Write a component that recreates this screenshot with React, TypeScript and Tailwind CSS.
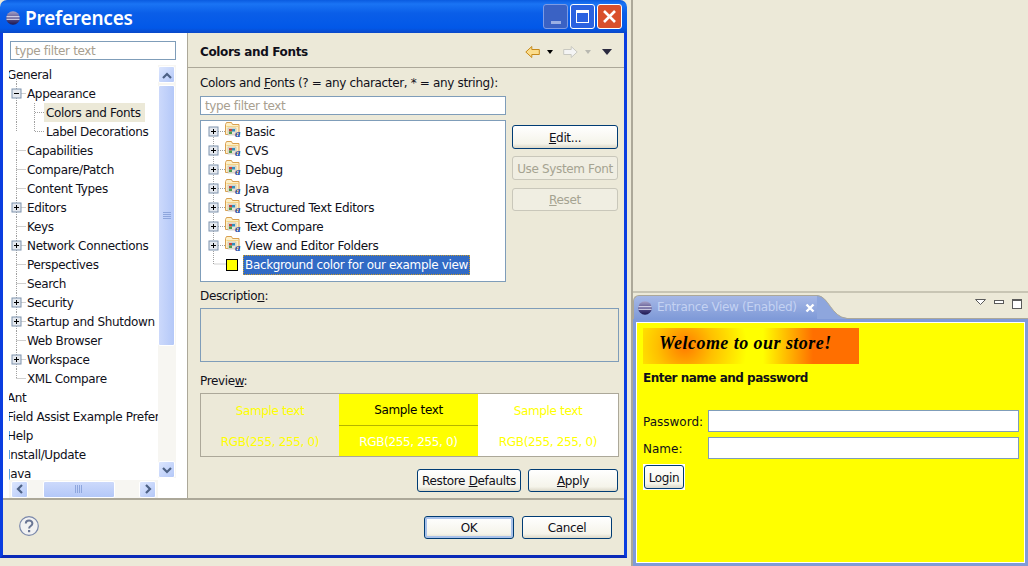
import React from "react";

const FONT = "[font-family:'DejaVu_Sans',sans-serif] text-[12px] tracking-[-0.35px] leading-[19px] text-[#10101a]";

type Node = { label: string; depth: number; exp?: "plus" | "minus"; selected?: boolean; vert?: number[]; last?: boolean };

const NAV: Node[] = [
  { label: "General", depth: 0, vert: [7] },
  { label: "Appearance", depth: 1, exp: "minus", vert: [7] },
  { label: "Colors and Fonts", depth: 2, selected: true, vert: [7, 25] },
  { label: "Label Decorations", depth: 2, last: true, vert: [7] },
  { label: "Capabilities", depth: 1, vert: [7] },
  { label: "Compare/Patch", depth: 1, vert: [7] },
  { label: "Content Types", depth: 1, vert: [7] },
  { label: "Editors", depth: 1, exp: "plus", vert: [7] },
  { label: "Keys", depth: 1, vert: [7] },
  { label: "Network Connections", depth: 1, exp: "plus", vert: [7] },
  { label: "Perspectives", depth: 1, vert: [7] },
  { label: "Search", depth: 1, vert: [7] },
  { label: "Security", depth: 1, exp: "plus", vert: [7] },
  { label: "Startup and Shutdown", depth: 1, exp: "plus", vert: [7] },
  { label: "Web Browser", depth: 1, vert: [7] },
  { label: "Workspace", depth: 1, exp: "plus", vert: [7] },
  { label: "XML Compare", depth: 1, last: true, vert: [7] },
  { label: "Ant", depth: 0 },
  { label: "Field Assist Example Preferences", depth: 0 },
  { label: "Help", depth: 0 },
  { label: "Install/Update", depth: 0 },
  { label: "Java", depth: 0 },
];

const FOLDERS = ["Basic", "CVS", "Debug", "Java", "Structured Text Editors", "Text Compare", "View and Editor Folders"];

function Expander({ x, y, kind }: { x: number; y: number; kind: "plus" | "minus" }) {
  return (
    <g>
      <rect x={x - 4.5} y={y - 4.5} width="9" height="9" fill="#e4e8ee" stroke="#7f93ad" />
      <path d={`M${x - 2.5} ${y}h5`} stroke="#000" />
      {kind === "plus" && <path d={`M${x} ${y - 2.5}v5`} stroke="#000" />}
    </g>
  );
}

function NavRow({ node }: { node: Node }) {
  const textLeft = node.depth === 0 ? "ml-[-2px]" : node.depth === 1 ? "ml-[18px]" : "ml-[35px]";
  const cx = node.depth === 1 ? 7.5 : 25.5;
  return (
    <div className="relative h-[19px] whitespace-nowrap">
      <svg className="absolute left-0 top-0" width="46" height="19">
        {(node.vert ?? []).map((v) => (
          <path
            key={v}
            d={`M${v + 0.5} ${node.depth === 0 ? 14 : 0}V${node.last && v === 7 ? 9 : 19}`}
            stroke="#a0a0a0"
            strokeDasharray="1 1"
          />
        ))}
        {node.depth === 2 && <path d="M25.5 0V9.5H35" stroke="#a0a0a0" strokeDasharray="1 1" fill="none" />}
        {node.depth === 1 && <path d="M7.5 9.5H17" stroke="#a0a0a0" strokeDasharray="1 1" />}
        {node.exp && <Expander x={cx} y={9.5} kind={node.exp} />}
      </svg>
      <span
        className={`relative inline-block h-[19px] pt-[1px] ${textLeft} ${
          node.selected ? "bg-[#ece9d8] pl-[2px] pr-[4px]" : node.depth === 2 ? "pl-[2px]" : ""
        }`}
      >
        {node.label}
      </span>
    </div>
  );
}

function FolderIcon() {
  return (
    <svg width="16" height="16" viewBox="0 0 16 16" className="mb-[3px] shrink-0">
      <path d="M.5 2.500l1-2h5l1 2h6.500v10H.5z" fill="#fdf0c8" stroke="#d9a050" />
      <path d="M1.500 4.500h12" stroke="#f4d488" />
      <rect x="3" y="6" width="8" height="7" fill="#e8e4d8" stroke="#b8b4a8" strokeWidth="0.6" />
      <rect x="4" y="7" width="3" height="2.500" fill="#c8433d" />
      <rect x="7" y="7" width="3" height="2.500" fill="#2f8fc0" />
      <rect x="4" y="9.500" width="3" height="2.500" fill="#4d9c4d" />
      <text x="10" y="15" fontSize="11" fontStyle="italic" fontWeight="700" fill="#1f4fa8" fontFamily="'Liberation Serif',serif">
        a
      </text>
    </svg>
  );
}

function ColorTree() {
  return (
    <div className="relative h-[162px] w-[306px] border border-[#7f9db9] bg-white pl-[6px] pt-[1px]">
      <svg className="absolute left-[8px] top-[10px]" width="30" height="140">
        <path d="M4.500 0V133H24" fill="none" stroke="#a0a0a0" strokeDasharray="1 1" />
      </svg>
      {FOLDERS.map((f) => (
        <div key={f} className="relative flex h-[19px] items-center">
          <svg width="18" height="19" className="shrink-0">
            <path d="M7 9.500H18" stroke="#a0a0a0" strokeDasharray="1 1" />
            <Expander x={6.500} y={9.500} kind="plus" />
          </svg>
          <FolderIcon />
          <span className="ml-[4px] pt-[2px]">{f}</span>
        </div>
      ))}
      <div className="relative flex h-[19px] items-center pl-[19px]">
        <span className="h-[12px] w-[12px] border border-black bg-[#ffff00]" />
        <span className="ml-[5px] border border-dotted border-[#c89a2c] bg-[#316ac5] pb-[1px] pl-[1px] pr-[1px] pt-[1px] leading-[16px] text-white">
          Background color for our example view
        </span>
      </div>
    </div>
  );
}

function Btn({ className, children, disabled }: { className: string; children: React.ReactNode; disabled?: boolean }) {
  return (
    <button
      className={`flex items-center justify-center rounded-[3px] border pt-[2px] ${
        disabled
          ? "border-[#c9c7ba] bg-[#f0eee2] text-[#a5a391]"
          : "border-[#003c74] bg-[linear-gradient(180deg,#ffffff,#f5f4ea_80%,#dcd8c8)]"
      } ${className}`}
    >
      {children}
    </button>
  );
}

function Chevron({ dir }: { dir: "up" | "down" | "left" | "right" }) {
  const d = {
    up: "M3 10l4-4 4 4",
    down: "M3 5l4 4 4-4",
    left: "M9 3L5 7l4 4",
    right: "M5 3l4 4-4 4",
  }[dir];
  return (
    <svg width="14" height="14" viewBox="0 0 14 14">
      <path d={d} fill="none" stroke="#4d6185" strokeWidth="2.200" />
    </svg>
  );
}

function ScrollBtn({ dir }: { dir: "up" | "down" | "left" | "right" }) {
  return (
    <div className="flex h-[17px] w-[17px] shrink-0 items-center justify-center rounded-[2px] border border-white bg-[linear-gradient(135deg,#dce6fe,#b4c8f8)]">
      <Chevron dir={dir} />
    </div>
  );
}

function Grip({ vertical }: { vertical?: boolean }) {
  return (
    <svg width="8" height="8" viewBox="0 0 8 8">
      {[0, 2, 4, 6].map((n) => (
        <path key={n} d={vertical ? `M0 ${n + 0.5}h8` : `M${n + 0.5} 0v8`} stroke="#8ea6dd" />
      ))}
    </svg>
  );
}

function Globe({ size = 14, id }: { size?: number; id: string }) {
  return (
    <svg width={size} height={size} viewBox="0 0 14 14" className="shrink-0">
      <defs>
        <linearGradient id={id} x1="0" y1="0" x2="0" y2="1">
          <stop offset="0" stopColor="#a8a4c8" />
          <stop offset="0.5" stopColor="#5a5490" />
          <stop offset="1" stopColor="#1c1650" />
        </linearGradient>
      </defs>
      <circle cx="7" cy="7" r="6.800" fill={`url(#${id})`} />
      <path d="M.5 5.800h13M.5 8.200h13" stroke="#f0f0fa" strokeWidth="1.100" />
    </svg>
  );
}

function TitleBar() {
  return (
    <div className="flex h-[33px] shrink-0 items-center rounded-t-[7px] bg-[linear-gradient(180deg,#0a5be0_0,#1a74f4_12%,#0a5ee8_40%,#0258e8_85%,#0a48c8)] pl-[6px] pr-[5px]">
      <div className="pt-[3px]">
        <Globe id="globe-title" />
      </div>
      <span className="ml-[5px] pt-[2px] text-[19px] font-semibold leading-[24px] tracking-[-0.2px] text-white [font-family:'Noto_Sans',sans-serif]">
        Preferences
      </span>
      <div className="ml-auto flex items-center gap-[2px]">
        <div className="flex h-[25px] w-[25px] items-end justify-center rounded-[3px] border border-[#7d9be4] bg-[#3a62c4] pb-[4px]">
          <span className="h-[3px] w-[10px] bg-[#9ab0e4]" />
        </div>
        <div className="flex h-[25px] w-[25px] items-center justify-center rounded-[3px] border border-white bg-[#2a62e0]">
          <span className="h-[13px] w-[13px] border border-t-[3px] border-white" />
        </div>
        <div className="flex h-[25px] w-[25px] items-center justify-center rounded-[3px] border border-white bg-[#d9502c]">
          <svg width="15" height="15" viewBox="0 0 15 15">
            <path d="M2 2l11 11M13 2L2 13" stroke="#fff" strokeWidth="2.600" />
          </svg>
        </div>
      </div>
    </div>
  );
}

function NavPane() {
  return (
    <div className="flex w-[185px] shrink-0 flex-col border-r border-[#aca899] bg-white pt-[8px]">
      <div className="ml-[7px] h-[19px] w-[166px] border border-[#7f9db9] pl-[4px] text-[#a8a090]">type filter text</div>
      <div className="ml-[6px] mt-[5px] flex">
        <div className="flex w-[149px] flex-col">
          <div className="h-[415px] overflow-hidden">
            {NAV.map((n) => (
              <NavRow key={n.label} node={n} />
            ))}
          </div>
          <div className="flex h-[18px] items-center bg-[#f7f6f2] pl-[2px]">
            <ScrollBtn dir="left" />
            <div className="ml-[15px] flex h-[17px] w-[72px] items-center justify-center rounded-[2px] border border-white bg-[linear-gradient(180deg,#ccd9fb,#b4c8f8)]">
              <Grip />
            </div>
            <div className="ml-[24px]">
              <ScrollBtn dir="right" />
            </div>
          </div>
        </div>
        <div className="flex h-[413px] w-[18px] flex-col bg-[#f7f6f2] pt-[1px]">
          <ScrollBtn dir="up" />
          <div className="mt-[2px] flex h-[261px] w-[17px] items-center justify-center rounded-[2px] border border-white bg-[linear-gradient(90deg,#ccd9fb,#b4c8f8)]">
            <Grip vertical />
          </div>
          <div className="flex-1" />
          <ScrollBtn dir="down" />
        </div>
      </div>
    </div>
  );
}

function PreviewCell({ className, children }: { className: string; children: React.ReactNode }) {
  return <div className={`flex items-center justify-center pt-[2px] ${className}`}>{children}</div>;
}

function ContentPane() {
  return (
    <div className="flex min-w-0 flex-1 flex-col">
      <div className="flex h-[35px] shrink-0 items-center border-b border-[#aca899] px-[12px] pt-[4px]">
        <span className="font-bold">Colors and Fonts</span>
        <div className="ml-auto flex items-center">
          <svg width="15" height="14" viewBox="0 0 15 14">
            <path d="M.8 7l6-5.500V4.500h7.500v5H6.800v3z" fill="#fbdd8c" stroke="#c78a1a" />
          </svg>
          <svg className="ml-[7px]" width="6" height="4">
            <path d="M0 0h6L3 4z" fill="#000" />
          </svg>
          <svg className="ml-[10px]" width="15" height="14" viewBox="0 0 15 14">
            <path d="M14.200 7l-6-5.500V4.500H.7v5h7.500v3z" fill="#f4f4f4" stroke="#c8c8c0" />
          </svg>
          <svg className="ml-[7px]" width="6" height="4">
            <path d="M0 0h6L3 4z" fill="#b8b8b0" />
          </svg>
          <svg className="ml-[11px]" width="10" height="6">
            <path d="M0 0h10L5 6z" fill="#2b2b40" />
          </svg>
        </div>
      </div>
      <div className="flex flex-col pl-[12px]">
        <div className="mt-[5px] h-[19px] pt-[1px]">
          Colors and <u>F</u>onts (? = any character, * = any string):
        </div>
        <div className="mt-[4px] h-[19px] w-[306px] border border-[#7f9db9] bg-white pl-[4px] text-[#a8a090]">type filter text</div>
        <div className="mt-[5px] flex">
          <ColorTree />
          <div className="ml-[6px] flex w-[106px] flex-col pt-[5px]">
            <Btn className="h-[24px]">
              <span>
                <u>E</u>dit...
              </span>
            </Btn>
            <Btn disabled className="mt-[7px] h-[24px]">
              Use System Font
            </Btn>
            <Btn disabled className="mt-[8px] h-[23px]">
              <span>
                <u>R</u>eset
              </span>
            </Btn>
          </div>
        </div>
        <div className="mt-[4px] h-[19px] pt-[1px]">
          Descriptio<u>n</u>:
        </div>
        <div className="mt-[3px] h-[54px] w-[419px] border border-[#7f9db9]" />
        <div className="mt-[9px] h-[19px] pt-[1px]">
          Previe<u>w</u>:
        </div>
        <div className="mt-[3px] grid h-[64px] w-[419px] grid-cols-[138px_139px_140px] border border-[#aca899] text-center text-[#ffff00]">
          <div className="flex flex-col">
            <PreviewCell className="h-[32px]">Sample text</PreviewCell>
            <PreviewCell className="flex-1">RGB(255, 255, 0)</PreviewCell>
          </div>
          <div className="flex flex-col bg-[#ffff00]">
            <PreviewCell className="h-[32px] border-b border-[#b4b400] text-black">Sample text</PreviewCell>
            <PreviewCell className="flex-1 text-white">RGB(255, 255, 0)</PreviewCell>
          </div>
          <div className="flex flex-col bg-white">
            <PreviewCell className="h-[32px]">Sample text</PreviewCell>
            <PreviewCell className="flex-1">RGB(255, 255, 0)</PreviewCell>
          </div>
        </div>
        <div className="mt-[12px] flex w-[418px] justify-end gap-[7px]">
          <Btn className="h-[23px] w-[104px]">
            <span>
              Restore <u>D</u>efaults
            </span>
          </Btn>
          <Btn className="h-[23px] w-[90px]">
            <span>
              <u>A</u>pply
            </span>
          </Btn>
        </div>
      </div>
    </div>
  );
}

function Dialog() {
  return (
    <div className="flex h-[558px] w-[627px] shrink-0 flex-col">
      <TitleBar />
      <div className="flex flex-1 flex-col border-x-[3px] border-b-[3px] border-x-[#0a3de0] border-b-[#0a2ab8] bg-[#ece9d8]">
        <div className="flex h-[465px] shrink-0">
          <NavPane />
          <ContentPane />
        </div>
        <div className="flex flex-1 items-start border-t-2 border-t-[#aca899] pl-[16px] pr-[12px] pt-[16px]">
          <svg width="20" height="20" viewBox="0 0 20 20">
            <circle cx="10" cy="10" r="9.300" fill="#f2f2f2" stroke="#7a88aa" strokeWidth="1.200" />
            <path d="M6.800 7.500c0-4 6.600-4 6.600 0 0 2.600-3.300 2.400-3.300 5" fill="none" stroke="#6a7694" strokeWidth="2" />
            <rect x="9" y="14" width="2.200" height="2.200" fill="#6a7694" />
          </svg>
          <div className="ml-auto flex gap-[8px]">
            <Btn className="h-[23px] w-[90px] shadow-[inset_0_0_0_2px_#a9c2ea]">OK</Btn>
            <Btn className="h-[23px] w-[90px]">Cancel</Btn>
          </div>
        </div>
      </div>
    </div>
  );
}

function EntranceView() {
  return (
    <div className="flex h-[271px] flex-col">
      <div className="relative flex h-[24px] shrink-0 items-start">
        <div className="flex h-[24px] w-[184px] items-center whitespace-nowrap rounded-tl-[6px] border-l border-t border-[#aca899] bg-[linear-gradient(180deg,#a6b8e6,#7f9ad8)] pl-[4px] text-[#c4d2f2]">
          <Globe size={14} id="globe-tab" />
          <span className="ml-[5px]">Entrance View (Enabled)</span>
          <svg className="ml-[8px] shrink-0" width="10" height="10" viewBox="0 0 10 10">
            <path d="M1.500 1.500l7 7M8.500 1.500l-7 7" stroke="#fff" strokeWidth="2.400" />
          </svg>
        </div>
        <svg width="30" height="24" className="shrink-0">
          <path d="M0 0C12 1 14 22 30 23V24H0z" fill="#8ea6dd" />
          <path d="M0 .5C12 1 14 22 30 23.500" fill="none" stroke="#aca899" />
        </svg>
        <div className="mt-[23px] h-px flex-1 bg-[#aca899]" />
        <svg className="absolute left-[342px] top-[4px]" width="11" height="6">
          <path d="M.5.500h10l-5 5z" fill="#fff" stroke="#5a5a5a" />
        </svg>
        <span className="absolute left-[361px] top-[5px] h-[4px] w-[10px] border border-[#5a5a5a] bg-white" />
        <span className="absolute left-[379px] top-[4px] h-[10px] w-[10px] border border-t-2 border-[#5a5a5a] bg-white" />
      </div>
      <div className="flex-1 bg-[#7f9ad8] p-[3px]">
        <div className="h-full border border-white bg-[#ffff00] pl-[6px] pt-[5px]">
          <div className="flex h-[36px] w-[216px] items-center bg-[radial-gradient(circle_at_42px_18px,#ff7a00_0,#ffc000_28px,#ffff00_62px,rgba(255,255,0,0)_70px),linear-gradient(90deg,#ffff00_0,#ffff00_120px,#ff6f00_170px,#ff6f00_100%)] pb-[6px] pl-[16px] text-[18px] font-bold italic tracking-[0.45px] text-black [font-family:'Liberation_Serif',serif]">
            Welcome to our store!
          </div>
          <div className="mt-[5px] font-bold tracking-[-0.5px]">Enter name and password</div>
          <div className="mt-[22px] flex h-[22px] items-center">
            <span className="w-[65px] pt-[2px] tracking-normal">Password:</span>
            <span className="h-[22px] w-[311px] border border-[#7f9db9] bg-white" />
          </div>
          <div className="mt-[5px] flex h-[22px] items-center">
            <span className="w-[65px] pt-[2px] tracking-normal">Name:</span>
            <span className="h-[22px] w-[311px] border border-[#7f9db9] bg-white" />
          </div>
          <div className="mt-[5px] inline-flex bg-white p-[1px]">
            <Btn className="h-[24px] w-[40px]">Login</Btn>
          </div>
        </div>
      </div>
    </div>
  );
}

export default function App() {
  return (
    <div className={`flex h-[566px] w-[1028px] overflow-hidden bg-[#ece9d8] ${FONT}`}>
      <Dialog />
      <div className="ml-[4px] flex flex-1 flex-col border-l-2 border-[#aca899]">
        <div className="h-[293px] shrink-0 border-b-2 border-[#c8c5b4]" />
        <div className="mt-[2px]">
          <EntranceView />
        </div>
      </div>
    </div>
  );
}
